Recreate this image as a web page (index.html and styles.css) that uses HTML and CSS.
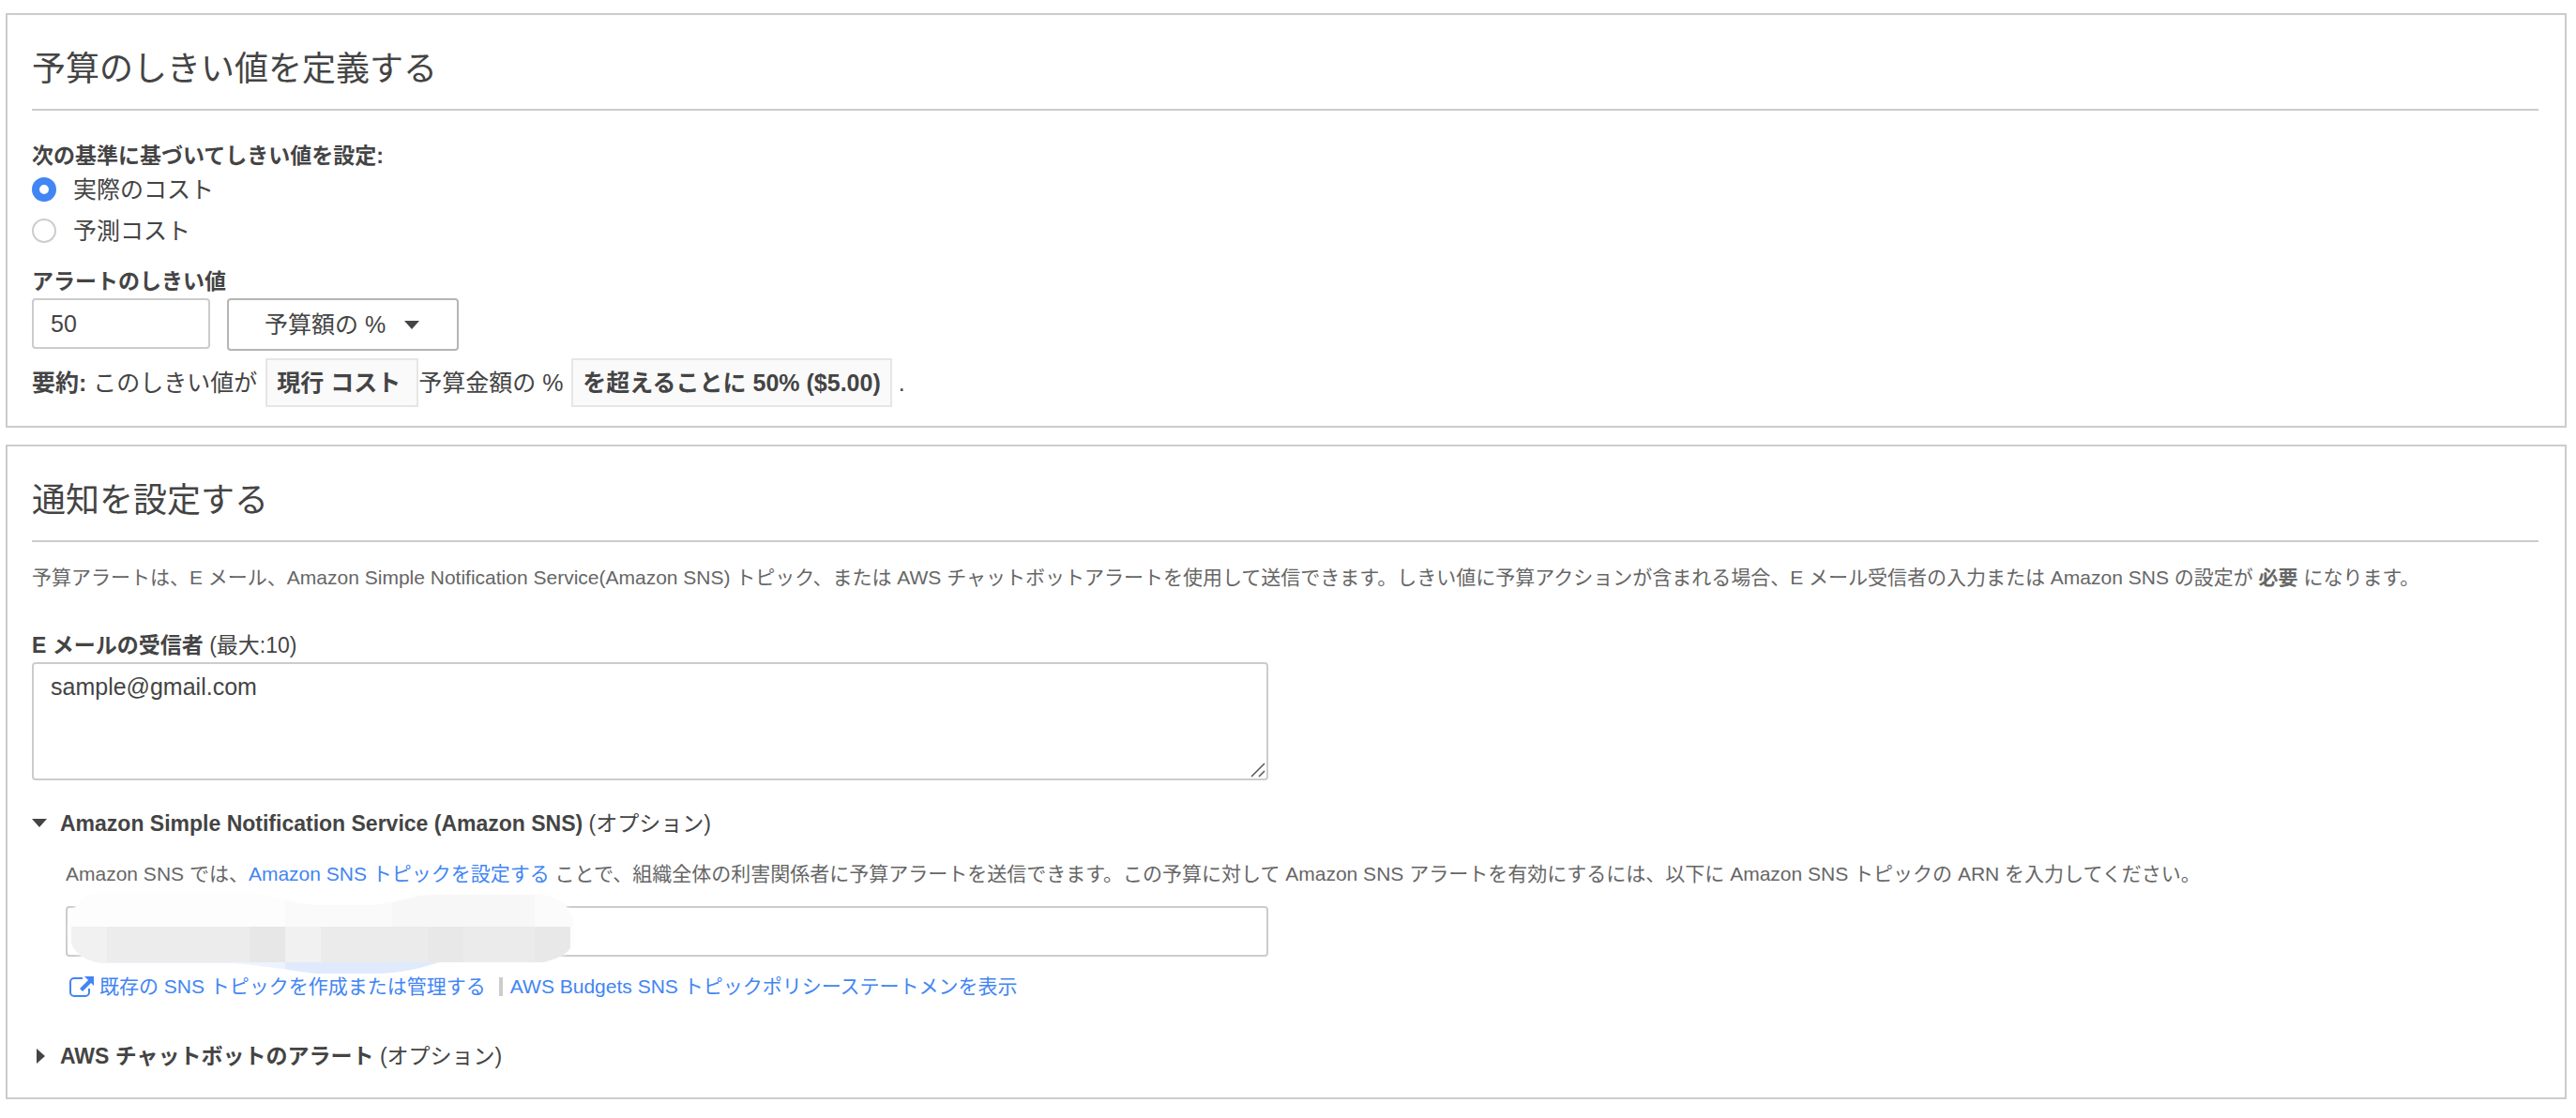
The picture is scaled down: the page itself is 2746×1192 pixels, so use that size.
FILE: index.html
```html
<!DOCTYPE html>
<html lang="ja">
<head>
<meta charset="utf-8">
<meta name="viewport" content="width=device-width, initial-scale=1">
<title>予算アラートの設定</title>
<link rel="stylesheet" href="styles.css">
</head>
<body>
<main class="page">
  <section class="panel">
    <h2 class="panel-title">予算のしきい値を定義する</h2>

    <fieldset class="basis">
      <legend class="label basis-label">次の基準に基づいてしきい値を設定:</legend>
      <label class="option"><input class="radio" type="radio" name="basis" checked><span>実際のコスト</span></label>
      <label class="option"><input class="radio" type="radio" name="basis"><span>予測コスト</span></label>
    </fieldset>

    <label class="label" for="threshold">アラートのしきい値</label>
    <div class="threshold">
      <input class="field threshold-value" id="threshold" type="text" value="50">
      <button class="unit" type="button">予算額の %
        <svg class="unit-caret" viewBox="0 0 16 9" aria-hidden="true"><path d="M0 0h16L8 9z"/></svg>
      </button>
    </div>

    <p class="summary"><b>要約:</b> このしきい値が <b class="chip chip-wide">現行 コスト</b><span>予算金額の %</span> <b class="chip">を超えることに 50% ($5.00)</b> .</p>
  </section>

  <section class="panel">
    <h2 class="panel-title">通知を設定する</h2>
    <p class="hint intro">予算アラートは、E メール、Amazon Simple Notification Service(Amazon SNS) トピック、または AWS チャットボットアラートを使用して送信できます。しきい値に予算アクションが含まれる場合、E メール受信者の入力または Amazon SNS の設定が <b>必要</b> になります。</p>

    <label class="label" for="emails">E メールの受信者 <span class="optional">(最大:10)</span></label>
    <div class="half emails-row">
      <div class="field-box">
        <textarea class="field emails" id="emails">sample@gmail.com</textarea>
        <svg class="grip" viewBox="0 0 16 16" aria-hidden="true"><path d="M1 15L15 1M9 15l6-6"/></svg>
      </div>
    </div>

    <button class="toggle" type="button" aria-expanded="true">
      <svg class="toggle-icon" viewBox="0 0 16 16" aria-hidden="true"><path d="M0 3h16L8 12z"/></svg>
      <span><b>Amazon Simple Notification Service (Amazon SNS)</b> (オプション)</span>
    </button>
    <div class="nested">
      <p class="hint">Amazon SNS では、<a href="#setup">Amazon SNS トピックを設定する</a> ことで、組織全体の利害関係者に予算アラートを送信できます。この予算に対して Amazon SNS アラートを有効にするには、以下に Amazon SNS トピックの ARN を入力してください。</p>
    </div>
    <div class="half nested">
      <div class="field-box">
        <input class="field arn" type="text" aria-label="Amazon SNS トピックの ARN">
        <svg class="redaction" viewBox="0 0 550 96" aria-hidden="true">
          <defs>
            <clipPath id="blob"><path d="M6 50C6 22 14 8 40 3H190C220 6 240 15 270 17H330C370 12 370 6 400 6H510C535 10 543 24 544 44V54C542 66 530 74 510 78H400C380 84 360 90 330 90H270C240 86 200 80 180 79H40C20 76 8 66 6 50Z"/></clipPath>
            <filter id="soft" x="-5%" y="-20%" width="110%" height="140%"><feGaussianBlur stdDeviation="2"/></filter>
          </defs>
          <path filter="url(#soft)" fill="#fdfdfd" d="M6 50C6 22 14 8 40 3H190C220 6 240 15 270 17H330C370 12 370 6 400 6H510C535 10 543 24 544 44V54C542 66 530 74 510 78H400C380 84 360 90 330 90H270C240 86 200 80 180 79H40C20 76 8 66 6 50Z"/>
          <g clip-path="url(#blob)">
            <path fill="#fdfdfd" d="M0 0h236v40H0z"/>
            <path fill="#fafafa" d="M236 0h114v40H236z"/>
            <path fill="#f7f7f7" d="M350 0h152v40H350z"/>
            <path fill="#fbfbfb" d="M502 0h48v40h-48z"/>
            <path fill="#f1f1f1" d="M8 40h38v38H8zM236 40h38v38h-38z"/>
            <path fill="#ececec" d="M46 40h152v38H46z"/>
            <path fill="#e7e7e7" d="M198 40h38v38h-38z"/>
            <path fill="#ebebeb" d="M274 40h228v38H274z"/>
            <path fill="#e8e8e8" d="M388 40h38v38h-38zM502 40h38v38h-38z"/>
            <path fill="#edf3fe" d="M8 78h228v18H8zM426 78h114v18H426z"/>
            <path fill="#e0eafd" d="M236 78h190v18H236z"/>
          </g>
        </svg>
      </div>
    </div>
    <div class="nested links">
      <a href="#manage"><svg class="external" viewBox="0 0 26 22" aria-hidden="true"><path class="external-frame" d="M14 2H5a4 4 0 0 0-4 4v11a4 4 0 0 0 4 4h12a4 4 0 0 0 4-4v-4"/><path d="M16 0h10v10l-3-3-9 9-3-3 9-9z"/></svg>既存の SNS トピックを作成または管理する</a>
      <span class="divider"></span>
      <a href="#policy">AWS Budgets SNS トピックポリシーステートメンを表示</a>
    </div>

    <button class="toggle toggle-last" type="button" aria-expanded="false">
      <svg class="toggle-icon" viewBox="0 0 16 16" aria-hidden="true"><path d="M5 0v16l9-8z"/></svg>
      <span><b>AWS チャットボットのアラート</b> (オプション)</span>
    </button>
  </section>
</main>
</body>
</html>
```
FILE: styles.css
```css
* {
  box-sizing: border-box;
}

body {
  margin: 0;
  background: #fff;
  color: #444;
  font-family: "Liberation Sans", "Noto Sans CJK JP", sans-serif;
  font-size: 25px;
  line-height: 36px;
}

.page {
  display: flex;
  flex-direction: column;
  gap: 18px;
  padding: 14px 10px 20px 6px;
}

.panel {
  padding: 32px 28px 20px 26px;
  border: 2px solid #ccc;
}

.panel-title {
  margin: 0 0 20px;
  padding-bottom: 16px;
  border-bottom: 2px solid #ccc;
  font-size: 36px;
  font-weight: 400;
  line-height: 52px;
}

.label {
  display: block;
  padding: 0 0 2px;
  font-size: 23px;
  font-weight: 700;
  line-height: 32px;
}

.basis {
  margin: 32px 0 18px;
  padding: 0;
  border: 0;
}

.basis-label {
  padding: 0;
}

.option {
  display: flex;
  align-items: center;
  gap: 18px;
  height: 40px;
}

.option + .option {
  margin-top: 4px;
}

.radio {
  appearance: none;
  width: 26px;
  height: 26px;
  margin: 0;
  border: 2px solid #ccc;
  border-radius: 50%;
  background: #fff;
}

.radio:checked {
  border: 8px solid #4285f4;
}

.field {
  display: block;
  margin: 0;
  padding: 0 18px;
  border: 2px solid #ccc;
  border-radius: 4px;
  background: #fff;
  color: #444;
  font: inherit;
}

.threshold {
  display: flex;
  gap: 18px;
}

.threshold-value {
  width: 190px;
  height: 54px;
}

.unit {
  display: flex;
  align-items: center;
  gap: 20px;
  height: 56px;
  padding: 0 40px 0 38px;
  border: 2px solid #b5b5b5;
  border-radius: 4px;
  background: #fff;
  color: #444;
  font: inherit;
}

.unit-caret {
  width: 16px;
  height: 9px;
  fill: #444;
}

.summary {
  margin: 8px 0 0;
  line-height: 52px;
}

.chip {
  display: inline-block;
  margin-left: 2px;
  padding: 0 10px;
  border: 2px solid #e6e6e6;
  background: #fafafa;
  line-height: 48px;
}

.chip-wide {
  padding-right: 17px;
}

.hint {
  margin: 0;
  color: #666;
  font-size: 21px;
}

.intro {
  margin-bottom: 38px;
}

.optional {
  font-weight: 400;
}

.half {
  width: 50%;
  padding-right: 18px;
}

.emails-row {
  margin-bottom: 28px;
}

.field-box {
  position: relative;
}

.emails {
  width: 100%;
  height: 126px;
  padding: 6px 18px;
  resize: none;
}

.grip {
  position: absolute;
  right: 3px;
  bottom: 3px;
  width: 16px;
  height: 16px;
  fill: none;
  stroke: #555;
  stroke-width: 1.5;
}

.toggle {
  display: flex;
  align-items: center;
  gap: 14px;
  margin: 0 0 18px;
  padding: 0;
  border: 0;
  background: none;
  color: #444;
  font: inherit;
  font-size: 23px;
}

.toggle-last {
  margin: 38px 0 6px;
}

.toggle-icon {
  width: 16px;
  height: 16px;
  fill: #444;
}

.nested {
  padding-left: 36px;
}

.half.nested {
  margin: 16px 0 14px;
}

.arn {
  width: 100%;
  height: 54px;
}

.redaction {
  position: absolute;
  top: -18px;
  left: -2px;
  width: 550px;
  height: 96px;
}

.links {
  display: flex;
  align-items: center;
  font-size: 21px;
}

a {
  color: #4285f4;
  text-decoration: none;
}

.external {
  width: 26px;
  height: 22px;
  margin: 0 6px 0 4px;
  vertical-align: -4px;
  fill: #4285f4;
}

.external-frame {
  fill: none;
  stroke: #4285f4;
  stroke-width: 2;
}

.divider {
  width: 4px;
  height: 20px;
  margin: 0 8px 0 14px;
  background: #ccc;
}
```
